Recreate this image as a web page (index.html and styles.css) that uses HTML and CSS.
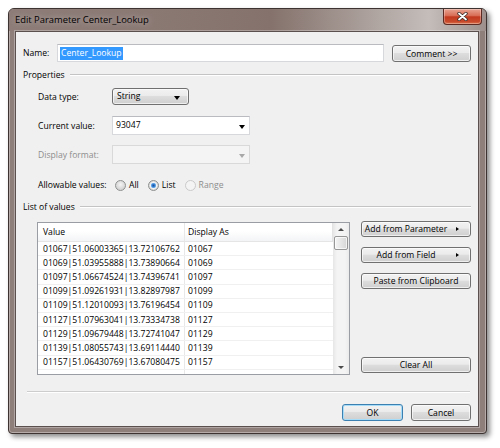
FILE: index.html
```html
<!DOCTYPE html>
<html lang="en">
<head>
  <meta charset="UTF-8">
  <title>Edit Parameter Center_Lookup</title>
  <link rel="stylesheet" href="styles.css">
</head>
<body>
  <div class="window">
    <div class="titlebar">
      <span class="title">Edit Parameter Center_Lookup</span>
      <div class="close">
        <svg width="11" height="9" viewBox="0 0 11 9">
          <path d="M2 1.5 L9 7.5 M9 1.5 L2 7.5" stroke="#3b2a26" stroke-width="3.4" stroke-linecap="round"/>
          <path d="M2 1.5 L9 7.5 M9 1.5 L2 7.5" stroke="#fff" stroke-width="1.8" stroke-linecap="round"/>
        </svg>
      </div>
    </div>

    <div class="client">
      <div class="name-row">
        <span class="name-label">Name:</span>
        <div class="textbox"><span class="selected">Center_Lookup</span></div>
        <button class="btn comment">Comment &gt;&gt;</button>
      </div>

      <div class="group group-props"><span>Properties</span></div>

      <div class="field type-row">
        <span class="field-label">Data type:</span>
        <div class="dropdown">String</div>
      </div>
      <div class="field current-row">
        <span class="field-label">Current value:</span>
        <div class="combo">93047</div>
      </div>
      <div class="field format-row">
        <span class="field-label disabled">Display format:</span>
        <div class="combo combo-disabled"></div>
      </div>
      <div class="field allow-row">
        <span class="allow-label">Allowable values:</span>
        <span class="radio"><i></i>All</span>
        <span class="radio checked"><i></i>List</span>
        <span class="radio radio-disabled"><i></i>Range</span>
      </div>

      <div class="group group-list"><span>List of values</span></div>

      <div class="list-area">
        <div class="listbox">
          <div class="grid">
            <div class="grid-head">
              <div class="col-value">Value</div>
              <div class="col-display">Display As</div>
            </div>
            <div id="rows"></div>
          </div>
          <div class="scrollbar">
            <div class="sb-up"></div>
            <div class="sb-thumb"></div>
            <div class="sb-track"></div>
            <div class="sb-down"></div>
          </div>
        </div>
        <div class="side">
          <button class="btn menu-btn first"><span>Add from Parameter</span><i></i></button>
          <button class="btn menu-btn"><span>Add from Field</span><i></i></button>
          <button class="btn">Paste from Clipboard</button>
          <button class="btn clear">Clear All</button>
        </div>
      </div>

      <div class="footer-line"></div>

      <div class="footer">
        <button class="btn ok">OK</button>
        <button class="btn cancel">Cancel</button>
      </div>
    </div>
  </div>

  <script>
    const values = [
      ['01067|51.06003365|13.72106762', '01067'],
      ['01069|51.03955888|13.73890664', '01069'],
      ['01097|51.06674524|13.74396741', '01097'],
      ['01099|51.09261931|13.82897987', '01099'],
      ['01109|51.12010093|13.76196454', '01109'],
      ['01127|51.07963041|13.73334738', '01127'],
      ['01129|51.09679448|13.72741047', '01129'],
      ['01139|51.08055743|13.69114440', '01139'],
      ['01157|51.06430769|13.67080475', '01157'],
      ['', '']
    ];

    const rows = document.getElementById('rows');
    values.forEach(([value, display]) => {
      const row = document.createElement('div');
      row.className = 'grid-row';
      row.innerHTML = `<div class="col-value">${value}</div><div class="col-display">${display}</div>`;
      rows.appendChild(row);
    });
  </script>
</body>
</html>
```

FILE: styles.css
```css
body {
  margin: 0;
  padding: 8px;
  background: #fff;
  font-family: 'Open Sans', sans-serif;
  font-size: 8.6px;
  color: #000;
}

.window {
  width: 479px;
  height: 426px;
  box-sizing: border-box;
  display: flex;
  flex-direction: column;
  background: #8f7f7b;
  border: 1px solid #3d3432;
  border-radius: 6px 6px 4px 4px;
  box-shadow: inset 0 0 0 1px rgba(255, 255, 255, 0.35), 3px 3px 5px rgba(0, 0, 0, 0.45);
}

/* title bar */
.titlebar {
  height: 22px;
  display: flex;
  align-items: flex-start;
  border-radius: 5px 5px 0 0;
  background: linear-gradient(90deg, #8d7c77 0%, #8a7873 30%, #85726c 55%, #b1a7a3 78%, #c4bdba 88%, #9d908c 100%);
}

.title {
  padding-left: 6px;
  line-height: 22px;
  font-size: 9.4px;
  text-shadow: 0 0 6px rgba(255, 255, 255, 0.55);
}

.close {
  margin-left: auto;
  margin-right: 4px;
  width: 39px;
  height: 16px;
  box-sizing: border-box;
  display: flex;
  align-items: center;
  justify-content: center;
  border: 1px solid #5c2a22;
  border-top: none;
  border-radius: 0 0 4px 4px;
  background: linear-gradient(#e8a392, #d86c55 45%, #c23a20 52%, #c84a2c 85%, #de7a52);
  box-shadow: inset 0 0 0 1px rgba(255, 255, 255, 0.3);
}

/* dialog body */
.client {
  flex: 1;
  margin: 0 7px 6px 6px;
  padding: 12px 7px 0;
  display: flex;
  flex-direction: column;
  border: 1px solid #5b504d;
  background: #f0f0f0;
  box-shadow: 0 0 0 1px rgba(255, 255, 255, 0.3);
}

.name-row {
  display: flex;
  align-items: flex-start;
  height: 18px;
}

.name-label {
  width: 34px;
  line-height: 18px;
}

.textbox {
  width: 327px;
  height: 18px;
  box-sizing: border-box;
  display: flex;
  align-items: center;
  padding-left: 2px;
  background: #fff;
  border: 1px solid #d6d8dc;
  border-top-color: #b9bbc0;
}

.selected {
  background: #3399ff;
  color: #fff;
  line-height: 13px;
  padding: 0 1px;
}

.btn {
  height: 17px;
  box-sizing: border-box;
  padding: 0;
  font: inherit;
  color: #000;
  border: 1px solid #707070;
  border-radius: 3px;
  background: linear-gradient(#f2f2f2, #ebebeb 45%, #dddddd 50%, #cfcfcf);
  box-shadow: inset 0 0 0 1px rgba(255, 255, 255, 0.65);
}

.comment {
  width: 79px;
  margin-left: 8px;
  margin-top: 1px;
}

/* group headings with rule */
.group {
  display: flex;
  align-items: center;
  height: 14px;
}

.group::after {
  content: '';
  flex: 1;
  margin-left: 5px;
  border-top: 1px solid #c4c4c4;
  border-bottom: 1px solid #fff;
}

.group-props { margin-top: 6px; }
.group-list { margin-top: 8px; }

.field {
  display: flex;
  align-items: center;
  padding-left: 15px;
}

.field-label { width: 74px; }
.disabled { color: #8d8d8d; }

.type-row { margin-top: 6px; height: 17px; }
.current-row { margin-top: 11px; height: 19px; }
.format-row { margin-top: 10px; height: 19px; }
.allow-row { margin-top: 14px; height: 14px; }

.dropdown {
  position: relative;
  width: 77px;
  height: 17px;
  box-sizing: border-box;
  padding-left: 4px;
  line-height: 15px;
  border: 1px solid #707070;
  border-radius: 3px;
  background: linear-gradient(#f2f2f2, #ebebeb 45%, #dddddd 50%, #cfcfcf);
  box-shadow: inset 0 0 0 1px rgba(255, 255, 255, 0.65);
}

.combo {
  position: relative;
  width: 138px;
  height: 19px;
  box-sizing: border-box;
  padding-left: 3px;
  line-height: 17px;
  background: #fff;
  border: 1px solid #d6d8dc;
  border-top-color: #b9bbc0;
}

.combo-disabled {
  background: #f4f4f4;
  border-color: #d9d9d9;
}

/* dropdown arrows */
.dropdown::after,
.combo::after {
  content: '';
  position: absolute;
  top: 50%;
  margin-top: -1px;
  border-left: 3.5px solid transparent;
  border-right: 3.5px solid transparent;
  border-top: 4px solid #000;
}

.dropdown::after { right: 8px; }
.combo::after { right: 4px; }
.combo-disabled::after { border-top-color: #a8a8a8; }

.allow-label { width: 77px; }

.radio {
  display: flex;
  align-items: center;
  margin-right: 9px;
}

.radio i {
  width: 11px;
  height: 11px;
  box-sizing: border-box;
  margin-right: 3px;
  border: 1px solid #8e8f8f;
  border-radius: 50%;
  background: radial-gradient(circle at 50% 40%, #f4f4f4, #d3d3d3 70%, #ececec);
}

.radio.checked i {
  background: radial-gradient(circle, #1d4f96 0, #3c86d8 1.6px, #8fc5f3 2.6px, #f4f4f4 3px, #d6d6d6 70%, #eeeeee);
}

.radio-disabled { color: #8d8d8d; }
.radio-disabled i {
  border-color: #cacaca;
  background: #f4f4f4;
}

/* list of values */
.list-area {
  display: flex;
  margin-top: 8px;
  height: 153px;
  padding-left: 14px;
}

.listbox {
  width: 313px;
  height: 153px;
  box-sizing: border-box;
  display: flex;
  overflow: hidden;
  background: #fff;
  border: 1px solid #9a9da3;
}

.grid {
  flex: 1;
  overflow: hidden;
}

.grid-head,
.grid-row {
  display: flex;
}

.grid-head {
  height: 19px;
  box-sizing: border-box;
  align-items: center;
  border-bottom: 1px solid #e5e5e5;
  background: linear-gradient(#fff, #fff 45%, #f3f4f6);
}

.grid-row {
  height: 14.2px;
  box-sizing: border-box;
  align-items: center;
  border-bottom: 1px solid #f0f0f0;
}

.col-value {
  width: 147px;
  box-sizing: border-box;
  padding-left: 5px;
  border-right: 1px solid #e8e8e8;
  align-self: stretch;
  display: flex;
  align-items: center;
}

.col-display {
  width: 148px;
  box-sizing: border-box;
  padding-left: 3px;
  align-self: stretch;
  display: flex;
  align-items: center;
}

.grid-head .col-display {
  border-right: 1px solid #e3e3e3;
}

.scrollbar {
  width: 16px;
  display: flex;
  flex-direction: column;
  background: linear-gradient(90deg, #e6e6e6, #f4f4f4 25%, #f4f4f4 75%, #ebebeb);
}

.sb-up,
.sb-down {
  height: 13px;
  position: relative;
}

.sb-up::after,
.sb-down::after {
  content: '';
  position: absolute;
  left: 5px;
  top: 5px;
  border-left: 3px solid transparent;
  border-right: 3px solid transparent;
}

.sb-up::after { border-bottom: 3px solid #4a4a4a; }
.sb-down::after { border-top: 3px solid #4a4a4a; }

.sb-thumb {
  height: 14px;
  margin: 0 1px;
  box-sizing: border-box;
  border: 1px solid #979797;
  border-radius: 2px;
  background: linear-gradient(90deg, #f5f5f5, #e6e6e6 50%, #d6d6d6);
  box-shadow: inset 0 0 0 1px rgba(255, 255, 255, 0.7);
}

.sb-track { flex: 1; }

/* buttons beside the list */
.side {
  width: 110px;
  margin-left: 11px;
  display: flex;
  flex-direction: column;
}

.side .btn {
  height: 16px;
  margin-top: 10px;
}

.side .first { margin-top: -1px; }

.side .clear {
  margin-top: auto;
  margin-bottom: 2px;
}

.menu-btn {
  display: flex;
  align-items: center;
}

.menu-btn span {
  flex: 1;
  text-align: center;
}

.menu-btn i {
  width: 14px;
  margin-right: 6px;
  height: 5px;
  position: relative;
}

.menu-btn i::after {
  content: '';
  position: absolute;
  left: 6px;
  top: 0;
  border-top: 2.5px solid transparent;
  border-bottom: 2.5px solid transparent;
  border-left: 3px solid #000;
}

/* footer */
.footer-line {
  margin: 16px 1px 0 4px;
  border-top: 1px solid #cdcdcd;
  border-bottom: 1px solid #fff;
}

.footer {
  display: flex;
  justify-content: flex-end;
  margin-top: 11px;
}

.ok {
  width: 61px;
  border-color: #3c7fb1;
  box-shadow: inset 0 0 0 1px #a6dcf7;
}

.cancel {
  width: 60px;
  margin-left: 8px;
}
```
